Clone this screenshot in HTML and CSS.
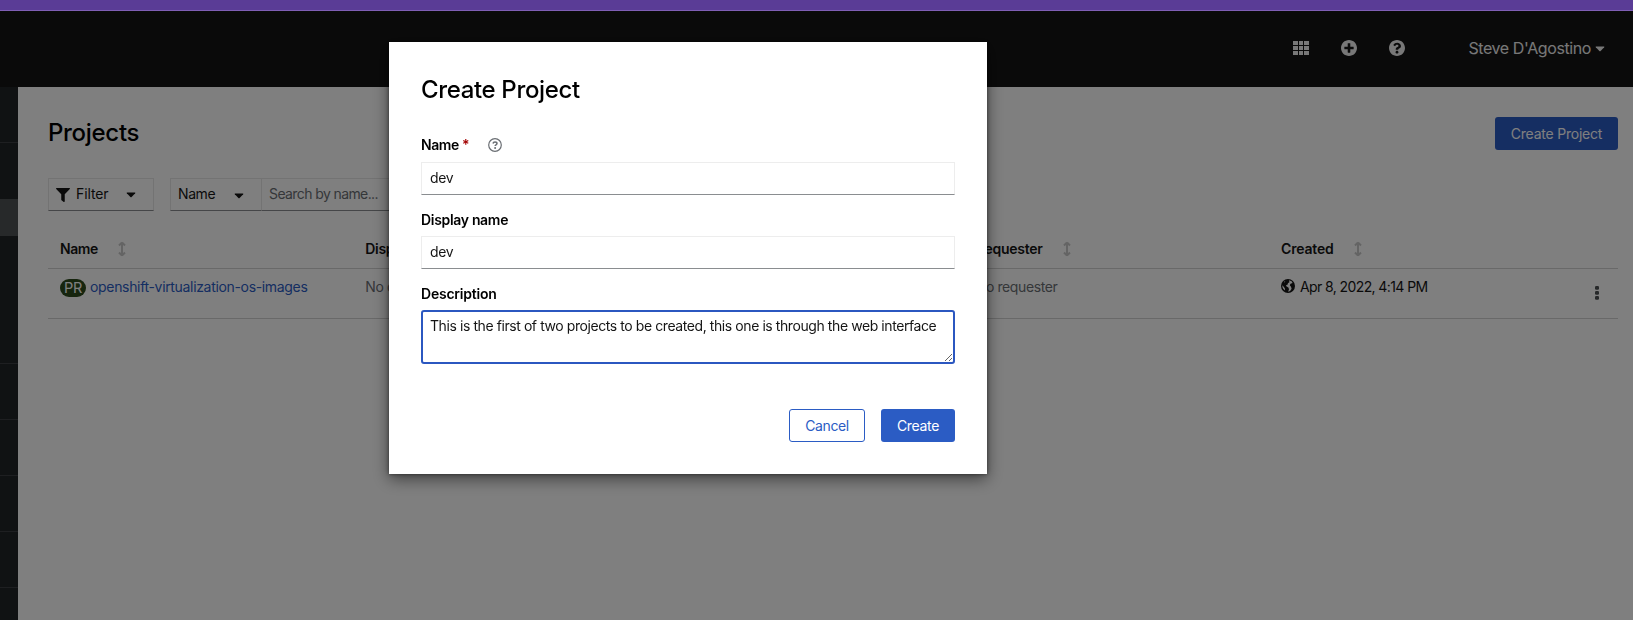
FILE: index.html
```html
<!DOCTYPE html>
<html lang="en">
<head>
<meta charset="utf-8">
<title>Projects</title>
<link rel="stylesheet" href="styles.css">
</head>
<body>
<svg class="defs" aria-hidden="true">
  <symbol id="sort" viewBox="0 0 8 16"><path d="M4 1.500 7 4.500M4 1.500 1 4.500M4 2v12M4 14.500 1 11.500M4 14.500l3-3" fill="none" stroke="currentColor" stroke-width="2"/></symbol>
  <symbol id="caret" viewBox="0 0 10 6"><path d="M1.200.4h7.600q1 0 .4.800L5.600 5q-.6.600-1.200 0L.8 1.200Q.2.400 1.200.4z" fill="currentColor"/></symbol>
</svg>
<div class="page">
  <div class="banner"></div>
  <header class="masthead">
    <svg class="ico-grid" viewBox="0 0 16 14"><path fill="currentColor" d="M0 0h5v4H0zM6 0h4v4H6zM11 0h5v4h-5zM0 5h5v4H0zM6 5h4v4H6zM11 5h5v4h-5zM0 10h5v4H0zM6 10h4v4H6zM11 10h5v4h-5z"/></svg>
    <svg class="ico" viewBox="8 8 496 496"><path fill="currentColor" d="M256 8C119 8 8 119 8 256s111 248 248 248 248-111 248-248S393 8 256 8zm144 276c0 6.600-5.400 12-12 12h-92v92c0 6.600-5.400 12-12 12h-56c-6.600 0-12-5.400-12-12v-92h-92c-6.600 0-12-5.400-12-12v-56c0-6.600 5.400-12 12-12h92v-92c0-6.600 5.400-12 12-12h56c6.600 0 12 5.400 12 12v92h92c6.600 0 12 5.400 12 12v56z"/></svg>
    <svg class="ico" viewBox="8 8 496 496"><path fill="currentColor" d="M504 256c0 137-111 248-248 248S8 393 8 256C8 119.100 119 8 256 8s248 111.100 248 248zM262.700 90c-54.500 0-89.300 23-116.500 63.800-3.500 5.300-2.400 12.400 2.700 16.300l34.700 26.300c5.200 3.900 12.600 3 16.700-2.100 17.900-22.700 30.100-35.800 57.300-35.800 20.400 0 45.700 13.100 45.700 33 0 15-12.400 22.700-32.500 34C247.100 238.500 216 254.900 216 296v4c0 6.600 5.400 12 12 12h56c6.600 0 12-5.400 12-12v-1.300c0-28.500 83.200-29.600 83.200-106.700 0-58-60.200-102-116.500-102zM256 338c-25.400 0-46 20.600-46 46s20.600 46 46 46 46-20.600 46-46-20.600-46-46-46z"/></svg>
    <div class="user"><span class="t-user">Steve D'Agostino</span><svg class="caret"><use href="#caret"/></svg></div>
  </header>
  <div class="body">
    <nav class="sidebar">
      <div class="nav-top"></div><div class="nav-gap"></div><div class="nav-current"></div><div class="nav-rest"></div>
      <div class="nav-item"></div><div class="nav-item"></div><div class="nav-item"></div><div class="nav-item"></div>
    </nav>
    <main class="main">
      <div class="title-row"><h1 class="title"><span class="t-title">Projects</span></h1><button class="btn primary wide"><span class="t-cp">Create Project</span></button></div>
      <div class="toolbar">
        <div class="select filter">
          <svg class="funnel" viewBox="0 0 512 512"><path fill="currentColor" d="M488 0H24C2.700 0-8 25.900 7.100 41L192 225.900V432c0 7.800 3.800 15.200 10.200 19.700l80 56C298 518.700 320 507.500 320 488V225.900L505 41C520 25.900 509.300 0 488 0z"/></svg>
          <span class="t-filter">Filter</span><svg class="caret"><use href="#caret"/></svg>
        </div>
        <div class="select by"><span class="t-by">Name</span><svg class="caret low"><use href="#caret"/></svg></div>
        <div class="select search"><span class="t-search">Search by name...</span></div>
      </div>
      <div class="row head">
        <div class="cell"><b class="t-name">Name</b><svg class="sort"><use href="#sort"/></svg></div>
        <div class="cell"><b class="t-disp">Display name</b></div>
        <div class="cell"></div>
        <div class="cell"><b class="t-req">Requester</b><svg class="sort"><use href="#sort"/></svg></div>
        <div class="cell"><b class="t-created">Created</b><svg class="sort"><use href="#sort"/></svg></div>
      </div>
      <div class="row data">
        <div class="cell"><span class="badge">PR</span><a class="link t-link">openshift-virtualization-os-images</a></div>
        <div class="cell muted"><span class="t-nreq">No display name</span></div>
        <div class="cell"></div>
        <div class="cell muted"><span class="t-nreq">No requester</span></div>
        <div class="cell"><svg class="globe" viewBox="0 0 14 14"><circle cx="7" cy="7" r="7" fill="currentColor"/><path fill="#fff" d="M8 1.300 10.600 2.300 11.600 4 9.500 4.700 8.800 6.200 10 7.800l.6 2-1.500 2.300-2 .6.9-2.400-.6-1.700L5.600 7.500 5 6.200l1.700-.7.2-1.300 1.500-.9zM1.400 6.200l1.500 1.900 1 1.300.2 2.200L2.200 9.800 1.400 8zM2.900 2.900l1.400-.8-.7 1.300z"/></svg><span class="t-date">Apr 8, 2022, 4:14 PM</span></div>
        <svg class="kebab" viewBox="0 0 4 14"><rect width="4" height="3.800" rx="1.200"/><rect y="5" width="4" height="3.800" rx="1.200"/><rect y="10" width="4" height="3.800" rx="1.200"/></svg>
      </div>
    </main>
  </div>
</div>
<div class="backdrop">
  <section class="modal">
    <h2 class="modal-title"><span class="t-mtitle">Create Project</span></h2>
    <div class="label first"><b class="t-name">Name</b><span class="star">*</span><svg class="help" viewBox="0 0 14 14"><circle cx="7" cy="7" r="6.300" fill="none" stroke="currentColor" stroke-width="1.200"/><path d="M5 5.500C5.200 4.400 6 3.900 7 3.900c1.200 0 2 .6 2 1.600 0 1.400-1.900 1.300-1.900 2.600" fill="none" stroke="currentColor" stroke-width="1.500"/><circle cx="7.100" cy="10" r="1" fill="currentColor"/></svg></div>
    <div class="input"><span class="t-dev">dev</span></div>
    <div class="label"><b class="t-disp">Display name</b></div>
    <div class="input"><span class="t-dev">dev</span></div>
    <div class="label"><b class="t-desc">Description</b></div>
    <textarea class="area" spellcheck="false">This is the first of two projects to be created, this one is through the web interface</textarea>
    <div class="actions"><button class="btn secondary"><span class="t-cancel">Cancel</span></button><button class="btn primary submit"><span class="t-create">Create</span></button></div>
  </section>
</div>
</body>
</html>
```
FILE: styles.css
```css
* { box-sizing: border-box; }
body { margin: 0; height: 620px; overflow: hidden; font: 14px/21px Inter, "Noto Sans", sans-serif; color: #151515; }
h1, h2 { margin: 0; font-weight: 500; font-size: 24px; line-height: 31px; color: #000; }
b { font-weight: 600; }
span, b, a { white-space: nowrap; }
svg { flex: none; }
.defs { position: absolute; width: 0; height: 0; }
.page { display: flex; flex-direction: column; height: 620px; }
.banner { flex: none; position: relative; z-index: 3; height: 11px; background: #5a3c96; border-bottom: 1px solid #7f5fb5; }
.masthead { flex: none; height: 76px; background: #151515; color: #f0f0f0; display: flex; align-items: center; padding: 0 28px 2px 1293px; }
.ico-grid { width: 16px; height: 14px; margin-right: 32px; }
.ico { width: 16px; height: 16px; margin-right: 32px; }
.user { margin-left: auto; display: flex; align-items: center; gap: 4px; font-size: 16px; padding-top: 2px; }
.user span { padding-bottom: 1px; }
.caret { width: 10px; height: 6px; }
.low { margin-top: 2px; }
.body { flex: 1; display: flex; min-height: 0; }
.sidebar { width: 18px; flex: none; background: #212427; overflow: hidden; }
.nav-top { height: 56px; border-bottom: 1px solid #3c3f42; }
.nav-gap { height: 56px; }
.nav-current { height: 37px; background: #4f5255; }
.nav-rest { height: 128px; border-bottom: 1px solid #3c3f42; }
.nav-item { height: 56px; border-bottom: 1px solid #3c3f42; }
.main { flex: 1; background: #fff; padding: 30px 15px 0 30px; }
.title-row { display: flex; justify-content: space-between; align-items: flex-start; height: 61px; }
.btn { height: 33px; padding: 0 0 1px; border: 0; border-radius: 3px; font: inherit; }
.wide { width: 123px; }
.primary { background: #2b5cc4; color: #fff; }
.secondary { width: 76px; background: #fff; border: 1px solid #2b5cc4; color: #2b5cc4; }
.submit { width: 74px; }
.toolbar { display: flex; }
.select { height: 33px; border: 1px solid #e6e6e6; border-bottom-color: #8a8d90; display: flex; align-items: center; padding: 0 8px; }
.select span { padding-bottom: 2px; }
.filter { width: 106px; margin-right: 16px; padding-left: 7px; }
.funnel { width: 14px; height: 14px; margin-right: 6px; }
.filter .caret { margin-left: auto; margin-right: 9px; }
.by { width: 92px; padding-left: 7px; }
.by .caret { margin-left: auto; margin-right: 9px; }
.search { width: 300px; border-left: 0; color: #6a6e73; padding-left: 7px; }
.row { display: flex; border-bottom: 1px solid #d2d2d2; padding-left: 12px; }
.head { height: 58px; align-items: flex-end; padding-bottom: 9px; }
.head b { padding-bottom: 2px; }
.data { height: 50px; padding-top: 9px; }
.cell { flex: none; width: 305.250px; height: 20px; display: flex; align-items: center; }
.data .t-link, .data .t-nreq, .data .t-date { padding-bottom: 3px; }
.sort { width: 8px; height: 16px; margin-left: 20px; color: #c8c8c8; }
.badge { width: 26px; height: 18px; border-radius: 9px; background: #2d4a1c; color: #fff; font-size: 14.500px; line-height: 17px; text-align: center; margin: -1px 4px 0 0; letter-spacing: -.3px; }
.link { color: #2b5cc4; }
.muted { color: #6a6e73; }
.globe { width: 14px; height: 14px; margin: -4px 5px 0 0; }
.kebab { width: 4px; height: 14px; margin: 8px 19px 0 auto; fill: #4f5255; }
.backdrop { position: fixed; inset: 0; z-index: 2; background: rgba(0,0,0,.5); }
.modal { width: 598px; height: 432px; margin: 42px 0 0 389px; padding: 32px; background: #fff; box-shadow: 0 5px 15px rgba(0,0,0,.5), 0 0 4px rgba(0,0,0,.5); }
.label { display: flex; align-items: center; height: 21px; margin: 14px 0 6px; color: #000; }
.first { margin: 29px 0 7px; }
.star { color: #a30000; font-weight: 600; margin-left: 3px; letter-spacing: -1px; }
.help { width: 14px; height: 14px; margin-left: 19px; color: #6a6e73; }
.input { height: 33px; border: 1px solid #ededed; border-bottom-color: #8a8d90; padding: 4px 8px; }
.area { display: block; width: 534px; height: 54px; border: 2px solid #2b57c0; border-radius: 3px; outline: 0; padding: 3px 7px; font: inherit; letter-spacing: -.42px; color: #151515; overflow: hidden; resize: vertical; }
.actions { display: flex; justify-content: flex-end; gap: 16px; margin-top: 45px; }
.t-user { letter-spacing: -.4px; }
.t-title { letter-spacing: -.3px; }
.t-cp { letter-spacing: -.22px; }
.t-by, .t-dev { letter-spacing: -.4px; }
.t-filter { letter-spacing: -.1px; }
.t-search { letter-spacing: -.6px; }
.t-name { letter-spacing: -.4px; }
.t-disp { letter-spacing: -.32px; }
.t-desc { letter-spacing: -.22px; }
.t-req { letter-spacing: -.25px; }
.t-created { letter-spacing: -.18px; }
.t-link, .t-create { letter-spacing: -.33px; }
.t-nreq { letter-spacing: -.4px; }
.t-date { letter-spacing: -.6px; }
.t-mtitle { letter-spacing: -.35px; }
.t-cancel { letter-spacing: -.4px; }
```
